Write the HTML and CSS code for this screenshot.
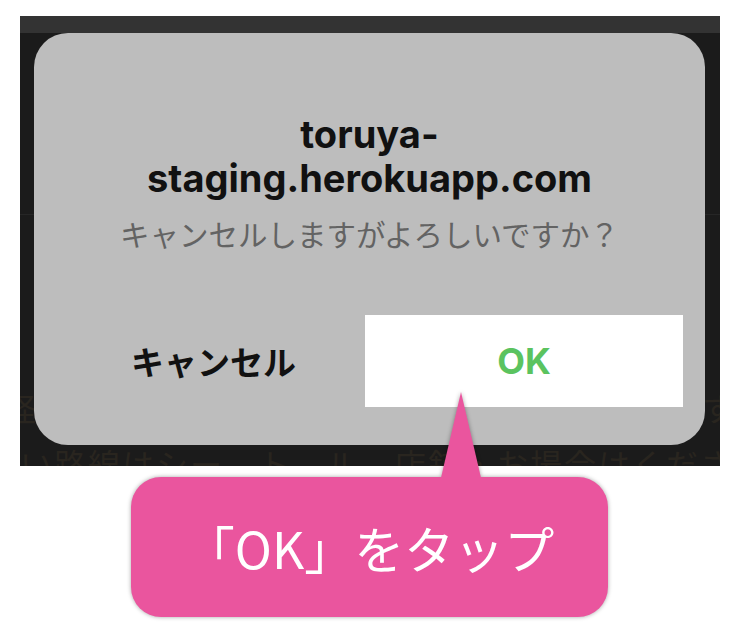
FILE: index.html
```html
<!DOCTYPE html>
<html lang="ja">
<head>
<meta charset="utf-8">
<title>Cancel confirm</title>
<link rel="stylesheet" href="styles.css">
</head>
<body>
<div class="page">
  <div class="screen">
    <div class="topbar"></div>
    <div class="bg">
      <div class="bg-rule"></div>
      <div class="bg-line bg-line1"><span class="bg-left">径</span><span>す</span></div>
      <div class="bg-line bg-line2">い路線はシー　ト　ル　店舗・お場合はください</div>
    </div>
    <div class="dialog">
      <div class="dialog-body">
        <h1 class="title">toruya-<br>staging.herokuapp.com</h1>
        <p class="message">キャンセルしますがよろしいですか？</p>
      </div>
      <div class="actions">
        <div class="btn btn-cancel">キャンセル</div>
        <div class="btn btn-ok">OK</div>
      </div>
    </div>
  </div>
  <div class="callout">
    <div class="callout-tail"></div>
    <div class="callout-box">「OK」をタップ</div>
  </div>
</div>
</body>
</html>
```

FILE: styles.css
```css
html, body {
  margin: 0;
  padding: 0;
  background: #ffffff;
}

.page {
  width: 740px;
  height: 632px;
  overflow: hidden;
  font-family: "Inter", "Noto Sans CJK JP", sans-serif;
}

.screen {
  position: relative;
  margin: 16px 0 0 20px;
  width: 700px;
  height: 450px;
  background: #1b1b1b;
  overflow: hidden;
}

.topbar {
  height: 17px;
  background: #333333;
}

.bg {
  display: flex;
  flex-direction: column;
}

.bg-rule {
  margin-top: 181px;
  height: 1px;
  background: #262626;
}

.bg-line {
  font-family: "Noto Sans CJK JP", sans-serif;
  font-size: 32px;
  line-height: 40px;
  color: #29251f;
  white-space: nowrap;
}

.bg-line1 {
  margin-top: 172px;
  display: flex;
  justify-content: space-between;
  margin-right: -14px;
}

.bg-left {
  margin-left: -16px;
}

.bg-line2 {
  margin-top: 16px;
  letter-spacing: 2px;
}

.dialog {
  position: absolute;
  left: 14px;
  top: 17px;
  width: 671px;
  height: 412px;
  border-radius: 34px;
  background: #bdbdbd;
  display: flex;
  flex-direction: column;
}

.dialog-body {
  padding-top: 79px;
  text-align: center;
}

.title {
  margin: 0;
  font-family: "Inter", sans-serif;
  font-weight: 700;
  font-size: 38px;
  line-height: 44px;
  color: #111111;
}

.message {
  margin: 15px 0 0;
  font-family: "Noto Sans CJK JP", sans-serif;
  font-weight: 400;
  font-size: 29.5px;
  line-height: 36px;
  color: #636363;
}

.actions {
  margin-top: auto;
  padding: 0 22px 38px;
  display: flex;
  height: 92px;
}

.btn {
  display: flex;
  align-items: center;
  justify-content: center;
  font-weight: 700;
}

.btn-cancel {
  flex: 1;
  padding-left: 6px;
  font-family: "Noto Sans CJK JP", sans-serif;
  font-size: 33px;
  color: #111111;
}

.btn-ok {
  width: 318px;
  background: #ffffff;
  font-family: "Inter", sans-serif;
  font-size: 36px;
  color: #5bc35f;
}

.callout {
  position: relative;
  margin: 11px 0 0 131px;
  width: 477px;
  height: 140px;
  filter: drop-shadow(0 0 2px rgba(0, 0, 0, 0.35));
}

.callout-tail {
  position: absolute;
  left: 309px;
  top: -85px;
  width: 42px;
  height: 90px;
  background: #ea559e;
  clip-path: polygon(50% 0, 100% 100%, 0 100%);
}

.callout-box {
  position: relative;
  height: 100%;
  border-radius: 30px;
  background: #ea559e;
  display: flex;
  align-items: center;
  justify-content: center;
  font-family: "Noto Sans CJK JP", sans-serif;
  font-size: 50px;
  color: #ffffff;
}
```
